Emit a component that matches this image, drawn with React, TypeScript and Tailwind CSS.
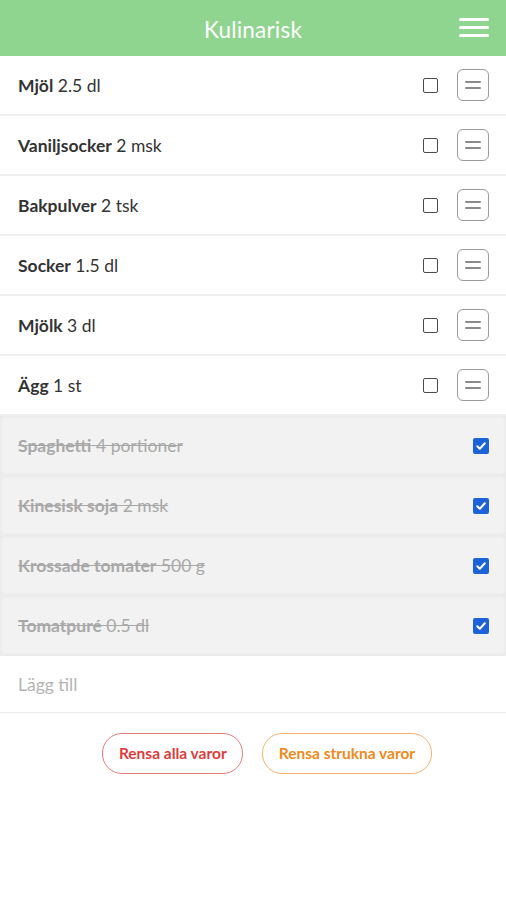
import React from "react";

const unchecked = [
  ["Mjöl", "2.5 dl"],
  ["Vaniljsocker", "2 msk"],
  ["Bakpulver", "2 tsk"],
  ["Socker", "1.5 dl"],
  ["Mjölk", "3 dl"],
  ["Ägg", "1 st"],
];
const checked = [
  ["Spaghetti", "4 portioner"],
  ["Kinesisk soja", "2 msk"],
  ["Krossade tomater", "500 g"],
  ["Tomatpuré", "0.5 dl"],
];

function Handle() {
  return (
    <div className="w-[32px] h-[32px] rounded-[6px] border border-[#9a9a9a] flex flex-col items-center justify-center gap-[4px]">
      <div className="w-[16px] h-[2px] bg-[#8a8a8a] rounded" />
      <div className="w-[16px] h-[2px] bg-[#8a8a8a] rounded" />
    </div>
  );
}

function CheckedBox() {
  return (
    <div className="w-[16px] h-[16px] rounded-[2px] bg-[#1e62d8] flex items-center justify-center">
      <svg width="12" height="12" viewBox="0 0 12 12">
        <path d="M2.3 6.3 L4.8 8.7 L9.8 3.3" stroke="white" strokeWidth="2" fill="none" strokeLinecap="round" strokeLinejoin="round" />
      </svg>
    </div>
  );
}

export default function App() {
  return (
    <div className="w-[506px] h-[900px] bg-white" style={{ fontFamily: "'Source Sans Pro', Lato, 'Open Sans', sans-serif" }}>
      <div className="h-[56px] bg-[#8fd48f] flex items-center justify-center relative">
        <span className="text-white text-[22.5px] tracking-[0.2px] pt-[3px]">Kulinarisk</span>
        <div className="absolute right-[17px] top-[18px] flex flex-col gap-[5px]">
          <div className="w-[30px] h-[3px] bg-white rounded" />
          <div className="w-[30px] h-[3px] bg-white rounded" />
          <div className="w-[30px] h-[3px] bg-white rounded" />
        </div>
      </div>
      {unchecked.map(([a, b]) => (
        <div key={a} className="h-[60px] flex items-center pl-[18px] pr-[17px] border-b-2 border-[#f0f0f0]">
          <span className="flex-1 text-[17.5px] text-[#333] pt-[3px]">
            <span className="font-bold">{a}</span> {b}
          </span>
          <div className="w-[15px] h-[15px] rounded-[2px] border-[1.5px] border-[#4a4a4a] mr-[19px]" />
          <Handle />
        </div>
      ))}
      {checked.map(([a, b]) => (
        <div key={a} className="h-[60px] flex items-center pl-[18px] pr-[17px] bg-[#f2f2f2] shadow-[inset_0_0_4px_rgba(0,0,0,0.06)] border-b border-[#ebebeb]">
          <span className="flex-1 text-[17.5px] text-[#a8a8a8] line-through pt-[2px]">
            <span className="font-bold">{a}</span> {b}
          </span>
          <CheckedBox />
        </div>
      ))}
      <div className="h-[57px] flex items-center pl-[18px] border-b border-[#ececec]">
        <span className="text-[17.5px] text-[#b4b4b4] pt-[2px]">Lägg till</span>
      </div>
      <div className="flex justify-center gap-[19px] pt-[20px] pl-[28px]">
        <div className="h-[41px] px-[15.5px] rounded-[20px] border border-[#e87a7a] flex items-center text-[#de3c3c] text-[15.5px] font-bold">
          Rensa alla varor
        </div>
        <div className="h-[41px] px-[15.5px] rounded-[20px] border border-[#f6b26b] flex items-center text-[#f08a1c] text-[15.5px] font-bold">
          Rensa strukna varor
        </div>
      </div>
    </div>
  );
}
